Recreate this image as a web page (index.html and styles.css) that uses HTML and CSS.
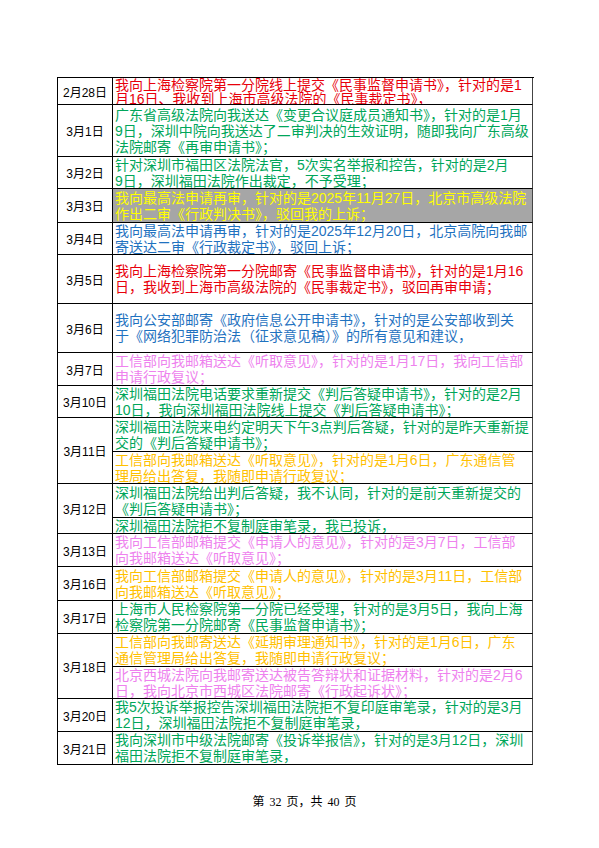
FILE: index.html
```html
<!DOCTYPE html>
<html lang="zh-CN">
<head>
    <meta charset="UTF-8">
    <meta name="viewport" content="width=device-width, initial-scale=1.0">
    <title>第 32 页</title>
    <link rel="stylesheet" href="styles.css">
</head>
<body>
    <div class="sheet">
        <div class="day">2月28日</div>
        <div class="note red tight"><p>我向上海检察院第一分院线上提交《民事监督申请书》，针对的是1<br>月16日、我收到上海市高级法院的《民事裁定书》，</p></div>

        <div class="day">3月1日</div>
        <div class="note green"><p>广东省高级法院向我送达《变更合议庭成员通知书》，针对的是1月<br>9日，深圳中院向我送达了二审判决的生效证明，随即我向广东高级<br>法院邮寄《再审申请书》；</p></div>

        <div class="day">3月2日</div>
        <div class="note green"><p>针对深圳市福田区法院法官，5次实名举报和控告，针对的是2月<br>9日，深圳福田法院作出裁定，不予受理；</p></div>

        <div class="day">3月3日</div>
        <div class="note yellow"><p>我向最高法申请再审，针对的是2025年11月27日，北京市高级法院<br>作出二审《行政判决书》，驳回我的上诉；</p></div>

        <div class="day">3月4日</div>
        <div class="note blue"><p>我向最高法申请再审，针对的是2025年12月20日，北京高院向我邮<br>寄送达二审《行政裁定书》，驳回上诉；</p></div>

        <div class="day">3月5日</div>
        <div class="note red"><p>我向上海检察院第一分院邮寄《民事监督申请书》，针对的是1月16<br>日，我收到上海市高级法院的《民事裁定书》，驳回再审申请；</p></div>

        <div class="day">3月6日</div>
        <div class="note blue"><p>我向公安部邮寄《政府信息公开申请书》，针对的是公安部收到关<br>于《网络犯罪防治法（征求意见稿）》的所有意见和建议，</p></div>

        <div class="day">3月7日</div>
        <div class="note violet"><p>工信部向我邮箱送达《听取意见》，针对的是1月17日，我向工信部<br>申请行政复议；</p></div>

        <div class="day">3月10日</div>
        <div class="note green"><p>深圳福田法院电话要求重新提交《判后答疑申请书》，针对的是2月<br>10日，我向深圳福田法院线上提交《判后答疑申请书》；</p></div>

        <div class="day span2">3月11日</div>
        <div class="note green"><p>深圳福田法院来电约定明天下午3点判后答疑，针对的是昨天重新提<br>交的《判后答疑申请书》；</p></div>
        <div class="note gold"><p>工信部向我邮箱送达《听取意见》，针对的是1月6日，广东通信管<br>理局给出答复，我随即申请行政复议；</p></div>

        <div class="day span2">3月12日</div>
        <div class="note green"><p>深圳福田法院给出判后答疑，我不认同，针对的是前天重新提交的<br>《判后答疑申请书》；</p></div>
        <div class="note green"><p>深圳福田法院拒不复制庭审笔录，我已投诉，</p></div>

        <div class="day">3月13日</div>
        <div class="note violet"><p>我向工信部邮箱提交《申请人的意见》，针对的是3月7日，工信部<br>向我邮箱送达《听取意见》；</p></div>

        <div class="day">3月16日</div>
        <div class="note gold"><p>我向工信部邮箱提交《申请人的意见》，针对的是3月11日，工信部<br>向我邮箱送达《听取意见》；</p></div>

        <div class="day">3月17日</div>
        <div class="note green"><p>上海市人民检察院第一分院已经受理，针对的是3月5日，我向上海<br>检察院第一分院邮寄《民事监督申请书》；</p></div>

        <div class="day span2">3月18日</div>
        <div class="note gold"><p>工信部向我邮寄送达《延期审理通知书》，针对的是1月6日，广东<br>通信管理局给出答复，我随即申请行政复议；</p></div>
        <div class="note violet"><p>北京西城法院向我邮寄送达被告答辩状和证据材料，针对的是2月6<br>日，我向北京市西城区法院邮寄《行政起诉状》；</p></div>

        <div class="day">3月20日</div>
        <div class="note green"><p>我5次投诉举报控告深圳福田法院拒不复印庭审笔录，针对的是3月<br>12日，深圳福田法院拒不复制庭审笔录，</p></div>

        <div class="day">3月21日</div>
        <div class="note green"><p>我向深圳市中级法院邮寄《投诉举报信》，针对的是3月12日，深圳<br>福田法院拒不复制庭审笔录，</p></div>
    </div>

    <div class="footer">第 32 页，共 40 页</div>
</body>
</html>
```

FILE: styles.css
```css
body {
    margin: 0;
    background: #fff;
    font-family: "Liberation Sans", "Noto Sans CJK SC", sans-serif;
}

/* the printed sheet */
.sheet {
    display: grid;
    grid-template-columns: 55px 420px;
    grid-template-rows: 27px 52px 32px 34px 32px 49px 49px 33px 32px 34px 32px 34px 16px 33px 34px 33px 33px 32px 33px 33px;
    width: 477px;
    margin: 77px 0 0 57px;
    border-top: 1px solid #000;
    border-left: 1px solid #000;
    box-sizing: border-box;
}

.day,
.note {
    box-sizing: border-box;
    border-right: 1px solid #000;
    border-bottom: 1px solid #000;
    overflow: hidden;
}

.day {
    display: flex;
    align-items: center;
    justify-content: center;
    font-size: 12px;
    color: #000;
}
.span2 { grid-row: span 2; }

.note {
    display: flex;
    flex-direction: column;
    justify-content: safe center;
    padding-left: 2px;
    font-size: 14px;
    line-height: 16px;
    border-right-color: #444;
}
.note p {
    margin: 0;
    white-space: nowrap;
}
/* row that is shorter than its two lines */
.note.tight { line-height: 14px; }

/* text colours as in the workbook */
.red { color: #e8000b; }
.green { color: #00a65a; }
.blue { color: #1f72c0; }
.violet { color: #ee82ee; }
.gold { color: #ffc000; }
.yellow { color: #ffff00; background: #a6a6a6; }

.footer {
    margin-top: 29px;
    padding-left: 10px;
    text-align: center;
    font-family: "Liberation Serif", "Noto Sans CJK SC", serif;
    font-size: 12px;
    line-height: 16px;
    word-spacing: 2px;
    color: #000;
}
```
